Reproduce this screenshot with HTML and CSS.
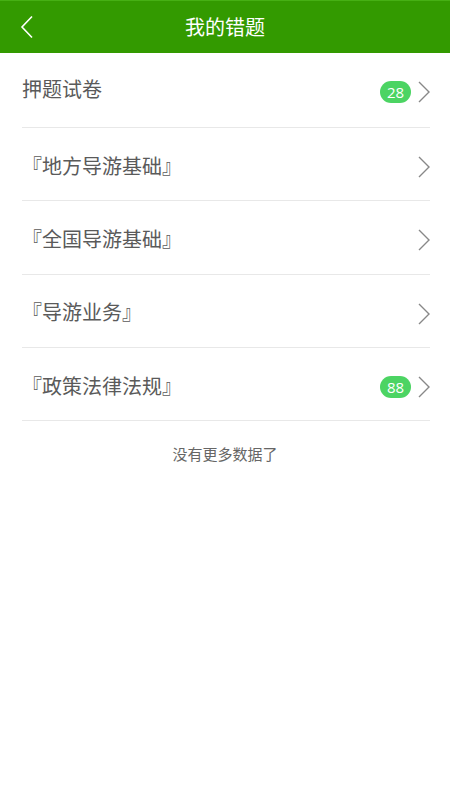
FILE: index.html
```
<!DOCTYPE html>
<html lang="zh">
<head>
<meta charset="utf-8">
<link rel="stylesheet" href="styles.css">
</head>
<body>
<header class="bar">
  <span class="back"><svg width="14" height="24" viewBox="0 0 14 24"><path d="M12 1.5 L2 12 L12 22.5" fill="none" stroke="#fff" stroke-width="1.6"/></svg></span>
  <h1 class="title">我的错题</h1>
</header>
<ul class="list">
  <li class="row first"><span class="label">押题试卷</span><span class="badge">28</span><span class="chev"><svg width="12" height="22" viewBox="0 0 12 22"><path d="M1 1 L11 11 L1 21" fill="none" stroke="#888" stroke-width="1.4"/></svg></span></li>
  <li class="row"><span class="label">『地方导游基础』</span><span class="chev"><svg width="12" height="22" viewBox="0 0 12 22"><path d="M1 1 L11 11 L1 21" fill="none" stroke="#888" stroke-width="1.4"/></svg></span></li>
  <li class="row"><span class="label">『全国导游基础』</span><span class="chev"><svg width="12" height="22" viewBox="0 0 12 22"><path d="M1 1 L11 11 L1 21" fill="none" stroke="#888" stroke-width="1.4"/></svg></span></li>
  <li class="row"><span class="label">『导游业务』</span><span class="chev"><svg width="12" height="22" viewBox="0 0 12 22"><path d="M1 1 L11 11 L1 21" fill="none" stroke="#888" stroke-width="1.4"/></svg></span></li>
  <li class="row"><span class="label">『政策法律法规』</span><span class="badge">88</span><span class="chev"><svg width="12" height="22" viewBox="0 0 12 22"><path d="M1 1 L11 11 L1 21" fill="none" stroke="#888" stroke-width="1.4"/></svg></span></li>
</ul>
<p class="more">没有更多数据了</p>
</body>
</html>
```
FILE: styles.css
```
html, body {
  margin: 0;
  padding: 0;
  background: #fff;
  font-family: "Noto Sans CJK SC", "Noto Sans", sans-serif;
}
.bar {
  height: 53px;
  background: #339a00;
  border-top: 1px solid #46b014;
  box-sizing: border-box;
  display: flex;
  align-items: center;
  justify-content: center;
  position: relative;
}
.back {
  position: absolute;
  left: 20px;
  top: 14px;
  display: flex;
}
.title {
  margin: 0;
  color: #fff;
  font-size: 20px;
  font-weight: normal;
  line-height: 1;
}
.list {
  list-style: none;
  margin: 0;
  padding: 0 20px 0 22px;
}
.row {
  height: 73.3px;
  border-bottom: 1px solid #e8e8e8;
  display: flex;
  align-items: center;
  padding-top: 3px;
  box-sizing: border-box;
}
.row.first {
  height: 75px;
  padding-top: 0;
}
.row.first .label {
  margin-top: -3px;
}
.label {
  flex: 1;
  font-size: 20px;
  color: #5a5a5a;
  line-height: 1;
}
.badge {
  width: 31px;
  height: 22px;
  border-radius: 11px;
  background: #4cd463;
  color: #fff;
  font-family: "Open Sans", "Liberation Sans", sans-serif;
  font-size: 15px;
  display: flex;
  align-items: center;
  justify-content: center;
  margin-right: 7px;
  margin-top: 3px;
}
.chev {
  display: flex;
  margin-top: 3px;
}
.more {
  margin: 22px 0 0;
  text-align: center;
  font-size: 15px;
  color: #666;
}
```
